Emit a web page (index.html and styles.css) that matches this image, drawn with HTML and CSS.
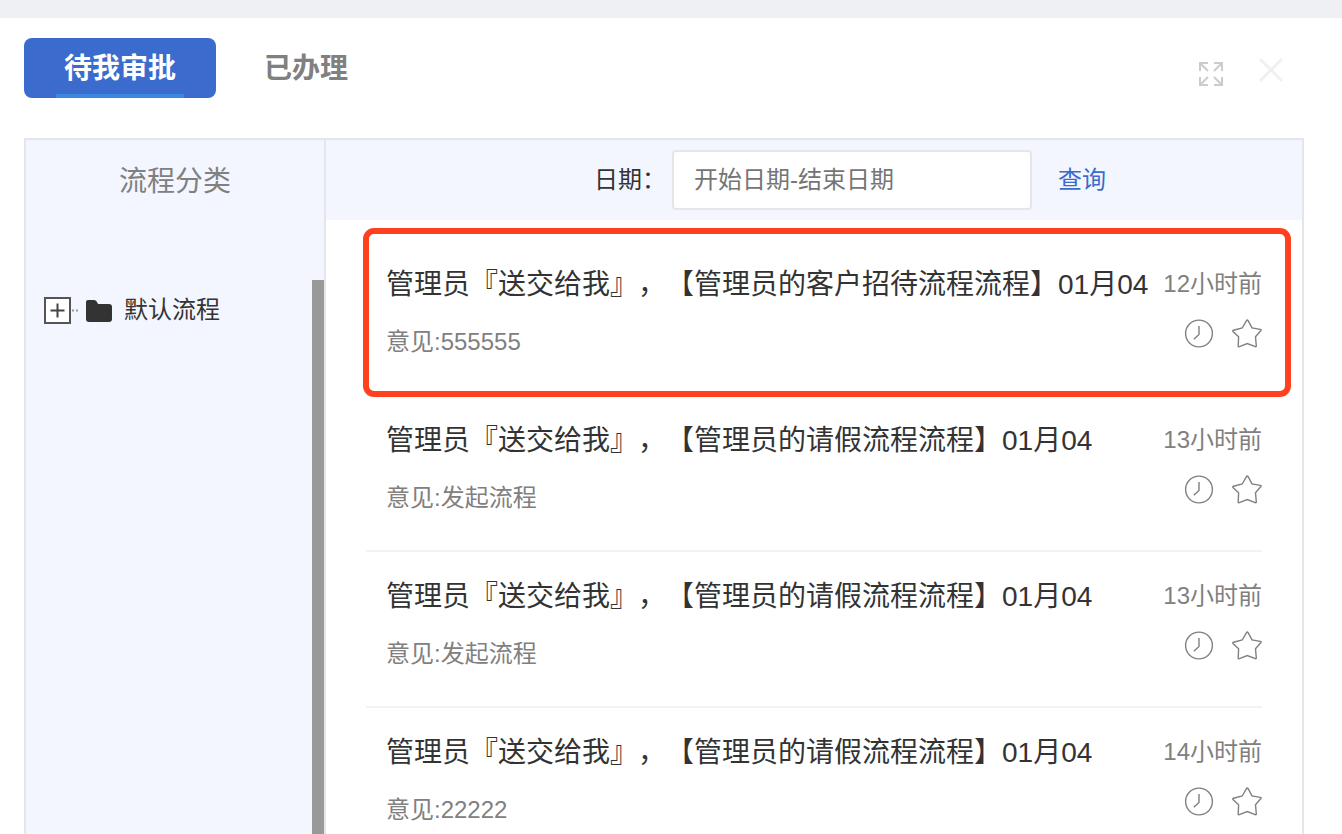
FILE: index.html
```html
<!DOCTYPE html>
<html lang="zh-CN">
<head>
  <meta charset="UTF-8" />
  <meta name="viewport" content="width=device-width, initial-scale=1.0"/>
  <title>待我审批</title>
  <link rel="stylesheet" href="styles.css">
</head>
<body>
  <!-- 公用图标 -->
  <svg class="sprite" aria-hidden="true">
    <symbol id="icon-clock" viewBox="0 0 30 30">
      <circle cx="15" cy="14.500" r="13.400"/>
      <path d="M15 7v8.500L9.800 20.300"/>
    </symbol>
    <symbol id="icon-star" viewBox="0 0 30 30">
      <path d="M15.300 1q.4 0 .8.700l3.900 7.200 8.300 1.500q1.300.3.600 1.100l-5.400 6.200.8 9.300q0 1-1 .6l-8-3-8 3q-1.200.4-1.100-.6l.4-9.300L1 12.500q-.6-1 .5-1.300l8.700-2.200 4.300-7.300q.4-.7.800-.7z"/>
    </symbol>
  </svg>

  <header class="tabs">
    <button class="tab active" type="button">待我审批</button>
    <button class="tab" type="button">已办理</button>
    <div class="tools">
      <button class="tool" type="button" aria-label="全屏">
        <svg class="icon-full" viewBox="0 0 26 26">
          <path d="M2 10V2H10M2 2l8 8M16 2h8V10M24 2l-8 8M2 16v8H10M2 24l8-8M16 24h8V16M24 24l-8-8"/>
        </svg>
      </button>
      <button class="tool" type="button" aria-label="关闭">
        <svg class="icon-close" viewBox="0 0 26 26">
          <path d="M2 2l22 22M24 2L2 24"/>
        </svg>
      </button>
    </div>
  </header>

  <main class="panel">
    <!-- 左侧分类 -->
    <aside class="side">
      <h2 class="side-title">流程分类</h2>
      <div class="tree">
        <button class="node" type="button">
          <svg class="icon-node" viewBox="0 0 70 28">
            <rect x="1" y="2" width="25" height="25" fill="#fff" stroke="#555" stroke-width="2"/>
            <path d="M6.500 14.500h14M13.500 7.500v14" stroke="#444" stroke-width="2"/>
            <path d="M28 14.500h2M32 14.500h2" stroke="#999" stroke-width="2"/>
            <path d="M44 4h6q2 0 3 2l1 2h11q3 0 3 3v12q0 3-3 3H45q-3 0-3-3V6q0-2 2-2z" fill="#333"/>
          </svg>
          默认流程
        </button>
      </div>
    </aside>

    <!-- 右侧列表 -->
    <section class="content">
      <form class="search">
        <label for="date">日期：</label>
        <input class="date" id="date" type="text" placeholder="开始日期-结束日期">
        <a class="query" href="#">查询</a>
      </form>
      <ul class="list">
        <li class="item marked">
          <div class="text">
            <a class="title" href="#">管理员『送交给我』，【管理员的客户招待流程流程】01月04</a>
            <p class="opinion">意见:555555</p>
          </div>
          <div class="meta">
            <span class="time">12小时前</span>
            <div class="actions">
              <button type="button" aria-label="稍后处理"><svg><use href="#icon-clock"/></svg></button>
              <button type="button" aria-label="收藏"><svg><use href="#icon-star"/></svg></button>
            </div>
          </div>
        </li>
        <li class="item">
          <div class="text">
            <a class="title" href="#">管理员『送交给我』，【管理员的请假流程流程】01月04</a>
            <p class="opinion">意见:发起流程</p>
          </div>
          <div class="meta">
            <span class="time">13小时前</span>
            <div class="actions">
              <button type="button" aria-label="稍后处理"><svg><use href="#icon-clock"/></svg></button>
              <button type="button" aria-label="收藏"><svg><use href="#icon-star"/></svg></button>
            </div>
          </div>
        </li>
        <li class="item">
          <div class="text">
            <a class="title" href="#">管理员『送交给我』，【管理员的请假流程流程】01月04</a>
            <p class="opinion">意见:发起流程</p>
          </div>
          <div class="meta">
            <span class="time">13小时前</span>
            <div class="actions">
              <button type="button" aria-label="稍后处理"><svg><use href="#icon-clock"/></svg></button>
              <button type="button" aria-label="收藏"><svg><use href="#icon-star"/></svg></button>
            </div>
          </div>
        </li>
        <li class="item">
          <div class="text">
            <a class="title" href="#">管理员『送交给我』，【管理员的请假流程流程】01月04</a>
            <p class="opinion">意见:22222</p>
          </div>
          <div class="meta">
            <span class="time">14小时前</span>
            <div class="actions">
              <button type="button" aria-label="稍后处理"><svg><use href="#icon-clock"/></svg></button>
              <button type="button" aria-label="收藏"><svg><use href="#icon-star"/></svg></button>
            </div>
          </div>
        </li>
      </ul>
    </section>
  </main>
</body>
</html>
```
FILE: styles.css
```css
* { box-sizing: border-box; }
body {
  margin: 0;
  height: 100vh;
  overflow: hidden;
  display: flex;
  flex-direction: column;
  border-top: 18px solid #eff0f4;
  background: #fff;
  color: #333;
  font-family: "Liberation Sans", "Noto Sans CJK SC", sans-serif;
  font-size: 24px;
  line-height: 40px;
  text-spacing-trim: space-all;
}
button, input { font: inherit; color: inherit; }
button { padding: 0; border: 0; background: none; cursor: pointer; }
a { color: inherit; text-decoration: none; }
h2, p, ul { margin: 0; padding: 0; }
svg { display: block; fill: none; }
.sprite { position: absolute; width: 0; height: 0; }

/* 顶部标签 */
.tabs {
  display: flex;
  gap: 8px;
  padding: 20px 56px 40px 24px;
}
.tab {
  height: 60px;
  padding: 2px 40px 0;
  border-radius: 8px;
  color: #808080;
  font-size: 28px;
  font-weight: bold;
}
.tab.active {
  position: relative;
  background: #3a6bcd;
  color: #fff;
}
.tab.active::after {
  content: "";
  position: absolute;
  left: 32px; right: 32px; bottom: 0;
  height: 4px;
  background: #3b88df;
}
.tools {
  display: flex;
  gap: 32px;
  align-items: center;
  margin-left: auto;
  padding-top: 12px;
}
.icon-full { width: 26px; height: 26px; stroke: #ccc; stroke-width: 2; }
.icon-close { width: 30px; height: 30px; padding: 2px; margin-bottom: 8px; stroke: #f0f0f0; stroke-width: 3; }

.panel {
  flex: 1;
  min-height: 0;
  display: flex;
  margin: 0 38px 0 24px;
  border: 2px solid #e4e6ec;
  border-bottom: 0;
}

/* 流程分类 */
.side {
  flex: none;
  display: flex;
  flex-direction: column;
  width: 300px;
  background: #f3f6ff;
  border-right: 2px solid #e4e6ec;
}
.side-title {
  height: 140px;
  padding-top: 2px;
  line-height: 80px;
  color: #808080;
  font-size: 28px;
  font-weight: normal;
  text-align: center;
}
.tree {
  flex: 1;
  padding: 10px 18px;
  border-right: 12px solid #999;
}
.node { display: flex; align-items: center; gap: 10px; }
.icon-node { width: 70px; height: 28px; }

/* 查询条件 */
.content { flex: 1; min-width: 0; }
.search {
  display: flex;
  align-items: center;
  justify-content: flex-end;
  height: 80px;
  padding-right: 196px;
  background: #f3f6ff;
}
.date {
  width: 360px;
  height: 60px;
  margin: 0 26px 0 6px;
  padding: 0 20px;
  border: 2px solid #e4e6ec;
  border-radius: 4px;
  background: #fff;
}
.date::placeholder { color: #757575; }
.query { color: #3a6bcd; }

/* 审批列表 */
.list { padding: 20px 40px 0; list-style: none; }
.item {
  display: flex;
  justify-content: space-between;
  height: 156px;
  padding: 24px 0 0 20px;
  border-bottom: 2px solid #f2f2f2;
}
.marked { position: relative; }
.marked::after {
  content: "";
  position: absolute;
  top: -12px; right: -29px; bottom: -3px; left: -3px;
  border: 6px solid #ff4120;
  border-radius: 11px;
  pointer-events: none;
}
.text { min-width: 0; }
.title {
  display: block;
  margin-bottom: 16px;
  overflow: hidden;
  font-size: 28px;
  line-height: 42px;
  white-space: nowrap;
}
.opinion, .time { color: #808080; }
.meta { flex: none; }
.time { display: block; }
.actions {
  display: flex;
  justify-content: flex-end;
  gap: 18px;
  margin-top: 15px;
}
.actions svg {
  width: 30px;
  height: 30px;
  stroke: #808080;
  stroke-width: 1.4;
}
```
